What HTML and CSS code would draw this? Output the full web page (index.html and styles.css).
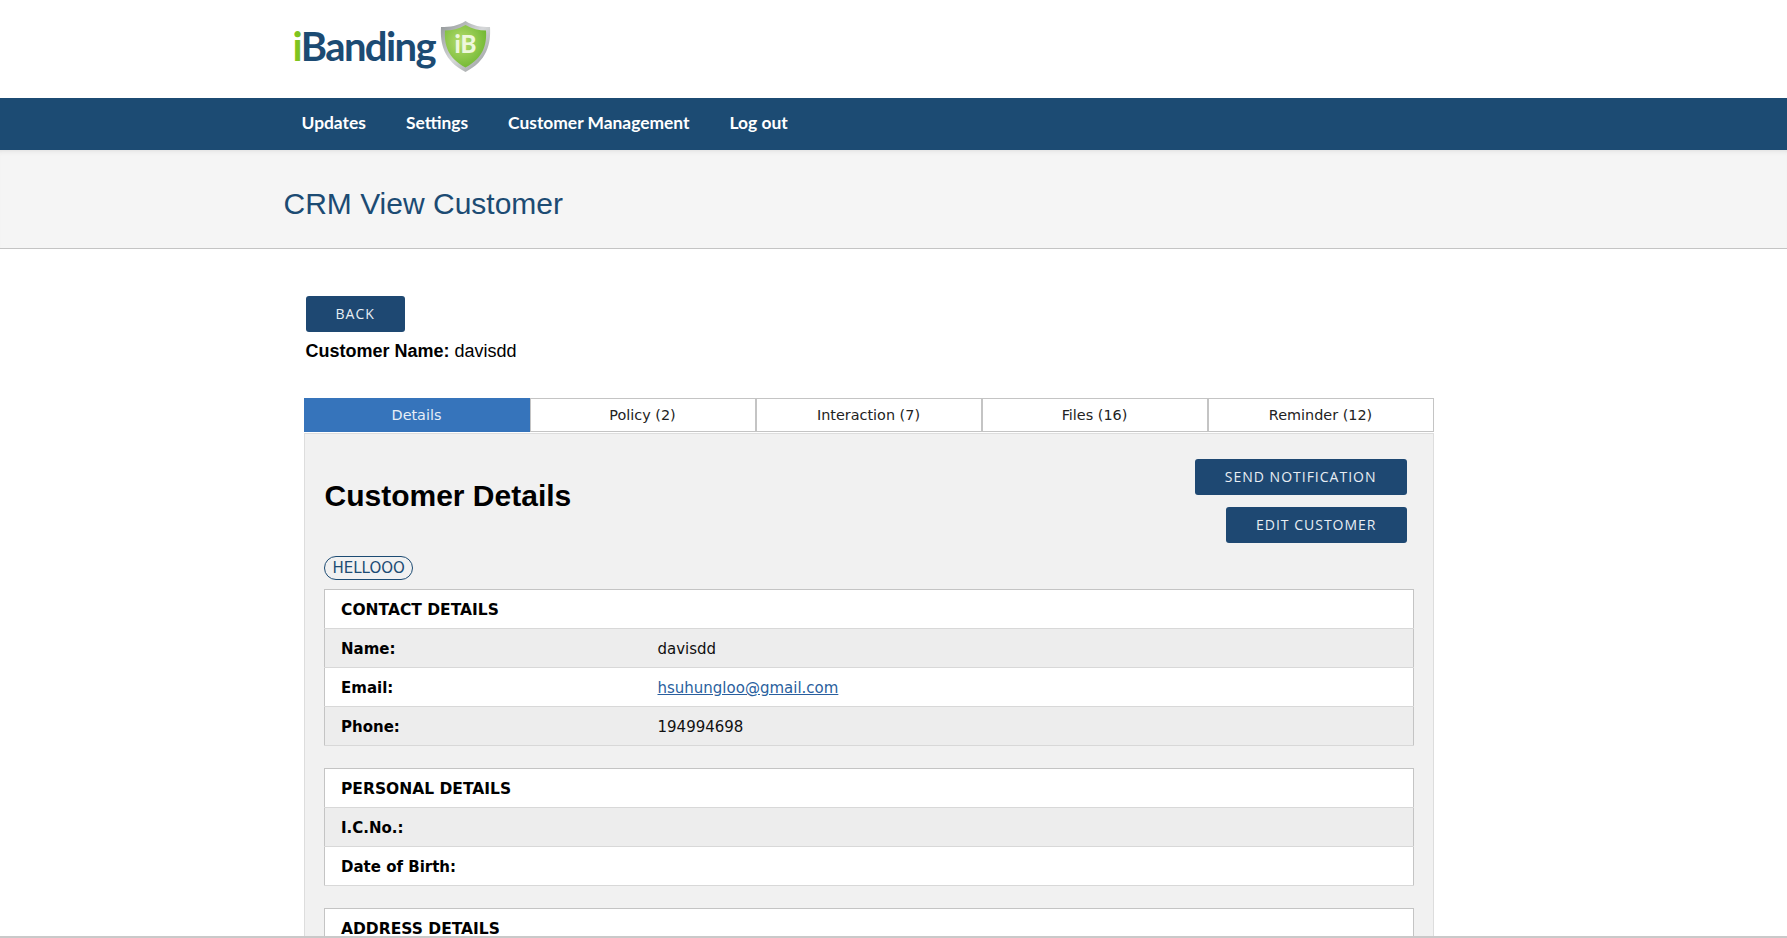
FILE: index.html
```html
<!DOCTYPE html>
<html lang="en">
<head>
    <meta charset="UTF-8">
    <title>CRM View Customer</title>
    <link rel="stylesheet" href="styles.css">
</head>
<body>
    <header class="top">
        <div class="container">
            <a class="logo" href="#">
                <span class="logo-text"><span class="logo-i">i</span>Banding</span>
                <svg class="logo-shield" width="51" height="52" viewBox="0 0 51 52">
                    <defs>
                        <linearGradient id="rim" x1="0" y1="0" x2="1" y2="1">
                            <stop offset="0" stop-color="#8f9496"/>
                            <stop offset="0.5" stop-color="#d6d8d9"/>
                            <stop offset="1" stop-color="#8d9193"/>
                        </linearGradient>
                        <radialGradient id="shield" cx="0.4" cy="0.4" r="0.7">
                            <stop offset="0" stop-color="#b5dc6e"/>
                            <stop offset="1" stop-color="#6cb52d"/>
                        </radialGradient>
                    </defs>
                    <path d="M25.5 1 C33 6 41 7 50 7 C51 24 47 41 25.5 52 C4 41 0 24 1 7 C10 7 18 6 25.5 1Z" fill="url(#rim)"/>
                    <path d="M25.5 5 C32 9 39 10.500 46 10.500 C47 25 43 38 25.500 47.500 C8 38 4 25 5 10.500 C12 10.500 19 9 25.500 5Z" fill="url(#shield)"/>
                    <text class="shield-text" x="25.500" y="33" text-anchor="middle">iB</text>
                </svg>
            </a>
        </div>
    </header>

    <nav class="nav">
        <div class="container nav-items">
            <a href="#">Updates</a>
            <a href="#">Settings</a>
            <a href="#">Customer Management</a>
            <a href="#">Log out</a>
        </div>
    </nav>

    <div class="page-title">
        <div class="container">
            <h1>CRM View Customer</h1>
        </div>
    </div>

    <main class="container content">
        <a class="btn" href="#">Back</a>
        <p class="customer-name"><strong>Customer Name:</strong> davisdd</p>

        <div class="tabs">
            <a class="tab active" href="#">Details</a>
            <a class="tab" href="#">Policy (2)</a>
            <a class="tab" href="#">Interaction (7)</a>
            <a class="tab" href="#">Files (16)</a>
            <a class="tab" href="#">Reminder (12)</a>
        </div>

        <section class="panel">
            <div class="panel-head">
                <h2>Customer Details</h2>
                <div class="panel-actions">
                    <a class="btn" href="#">Send Notification</a>
                    <a class="btn" href="#">Edit Customer</a>
                </div>
            </div>

            <span class="tag">HELLOOO</span>

            <table class="info">
                <tr><th colspan="2">CONTACT DETAILS</th></tr>
                <tr class="alt"><td class="label">Name:</td><td>davisdd</td></tr>
                <tr><td class="label">Email:</td><td><a href="#">hsuhungloo@gmail.com</a></td></tr>
                <tr class="alt"><td class="label">Phone:</td><td>194994698</td></tr>
            </table>

            <table class="info">
                <tr><th colspan="2">PERSONAL DETAILS</th></tr>
                <tr class="alt"><td class="label">I.C.No.:</td><td></td></tr>
                <tr><td class="label">Date of Birth:</td><td></td></tr>
            </table>

            <table class="info">
                <tr><th colspan="2">ADDRESS DETAILS</th></tr>
            </table>
        </section>
    </main>

    <div class="bottom-line"></div>
</body>
</html>
```

FILE: styles.css
```css
:root {
    --navy: #1c4b73;
    --btn: #1e4872;
    --line: #c4c4c4;
    --panel: #f1f1f1;
    --font-main: 'DejaVu Sans', sans-serif;
    --font-head: 'Liberation Sans', sans-serif;
}
* {
    box-sizing: border-box;
    margin: 0;
    padding: 0;
}
html, body {
    height: 938px;
    overflow: hidden;
}
body {
    font-family: var(--font-main);
    font-size: 14px;
    color: #111;
    background: #fff;
}
.container {
    width: 1220px;
    margin: 0 auto;
}
.top {
    height: 98px;
    padding-top: 20px;
}
.logo {
    display: inline-flex;
    align-items: center;
    gap: 5px;
    margin-left: 9px;
    text-decoration: none;
}
.logo-text {
    font-family: 'Lato', sans-serif;
    font-size: 40px;
    font-weight: 700;
    letter-spacing: -1.6px;
    color: var(--navy);
}
.logo-i {
    color: #7fc41f;
}
.shield-text {
    font-family: 'Lato', sans-serif;
    font-size: 24px;
    font-weight: 900;
    fill: #eef7dc;
}
.nav {
    height: 52px;
    background: var(--navy);
}
.nav-items {
    display: flex;
    align-items: center;
    gap: 40px;
    height: 100%;
    padding: 0 0 3px 18px;
}
.nav-items a {
    font-family: 'Lato', sans-serif;
    font-size: 17.4px;
    font-weight: 700;
    color: #fff;
    text-decoration: none;
}
.page-title {
    height: 99px;
    background: #f5f5f5;
    border-bottom: 1px solid var(--line);
    box-shadow: inset 0 5px 5px -4px #ddd;
}
.page-title h1 {
    font-family: var(--font-head);
    font-size: 30px;
    font-weight: 400;
    line-height: 107px;
    color: var(--navy);
}
.content {
    padding: 47px 0 0 20px;
}
.btn {
    display: inline-block;
    height: 36px;
    padding: 0 30px;
    background: var(--btn);
    border-radius: 3px;
    font-family: 'Open Sans', sans-serif;
    font-size: 14px;
    line-height: 36px;
    letter-spacing: 1px;
    text-transform: uppercase;
    color: #e8eef4;
    text-decoration: none;
}
.content > .btn {
    margin-left: 2px;
}
.customer-name {
    margin: 8px 0 36px 2px;
    font-family: var(--font-head);
    font-size: 18px;
    line-height: 22px;
    color: #000;
}
.tabs {
    display: flex;
    width: 1130px;
    height: 34px;
}
.tab {
    flex: 1;
    border: 1px solid var(--line);
    font-size: 14.4px;
    line-height: 32px;
    text-align: center;
    color: #222;
    text-decoration: none;
}
.tab.active {
    background: #3674bb;
    border-color: #3674bb;
    color: #e6eef7;
}
.panel {
    width: 1130px;
    height: 505px;
    margin-top: 1px;
    padding: 25px 26px 0 19px;
    overflow: hidden;
    background: var(--panel);
    border: 1px solid #ddd;
    border-bottom: none;
}
.panel-head {
    display: flex;
    justify-content: space-between;
    height: 97px;
}
.panel-head h2 {
    margin: 17px 0 0 1px;
    font-family: var(--font-head);
    font-size: 30px;
    line-height: 40px;
    color: #000;
}
.panel-actions {
    display: flex;
    flex-direction: column;
    align-items: flex-end;
    gap: 12px;
}
.tag {
    display: inline-block;
    height: 24px;
    padding: 0 7px 0 8px;
    border: 1px solid var(--navy);
    border-radius: 12px;
    font-size: 15px;
    line-height: 22px;
    color: var(--navy);
    vertical-align: top;
}
.info {
    width: 1090px;
    margin-top: 9px;
    margin-bottom: 22px;
    border-collapse: collapse;
    background: #fff;
    border: 1px solid var(--line);
    font-size: 15px;
}
.info + .info {
    margin-top: 0;
}
.info tr {
    height: 39px;
    border-bottom: 1px solid #d8d8d8;
}
.info th, .info td {
    padding: 2px 16.5px 0;
    text-align: left;
    vertical-align: middle;
}
.info th {
    font-size: 15.5px;
}
.info th, .info .label {
    font-weight: 700;
    color: #000;
}
.info .label {
    width: 317px;
}
.info .alt {
    background: #ededed;
}
.info a {
    color: #2a5f9e;
}
.bottom-line {
    position: fixed;
    left: 0;
    right: 0;
    bottom: 0;
    height: 2px;
    background: #c9c9c9;
}
```
